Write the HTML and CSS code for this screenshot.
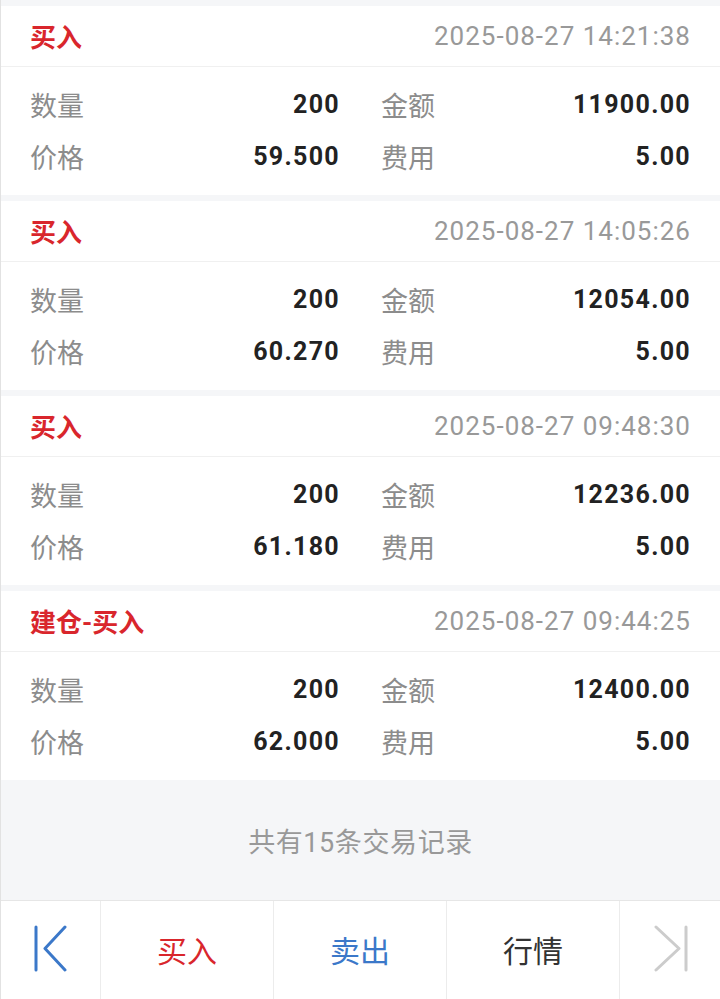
FILE: index.html
```html
<!DOCTYPE html>
<html lang="zh-CN">
<head>
    <meta charset="UTF-8">
    <meta name="viewport" content="width=device-width, initial-scale=1.0">
    <title>交易记录</title>
    <link rel="stylesheet" href="styles.css">
</head>
<body>
    <div class="page">
        <div class="list">
            <div class="trade">
                <div class="trade-head">
                    <span class="trade-type">买入</span>
                    <span class="trade-time">2025-08-27 14:21:38</span>
                </div>
                <div class="trade-body">
                    <div class="cell"><span class="label">数量</span><span class="value">200</span></div>
                    <div class="cell"><span class="label">金额</span><span class="value">11900.00</span></div>
                    <div class="cell"><span class="label">价格</span><span class="value">59.500</span></div>
                    <div class="cell"><span class="label">费用</span><span class="value">5.00</span></div>
                </div>
            </div>
            <div class="trade">
                <div class="trade-head">
                    <span class="trade-type">买入</span>
                    <span class="trade-time">2025-08-27 14:05:26</span>
                </div>
                <div class="trade-body">
                    <div class="cell"><span class="label">数量</span><span class="value">200</span></div>
                    <div class="cell"><span class="label">金额</span><span class="value">12054.00</span></div>
                    <div class="cell"><span class="label">价格</span><span class="value">60.270</span></div>
                    <div class="cell"><span class="label">费用</span><span class="value">5.00</span></div>
                </div>
            </div>
            <div class="trade">
                <div class="trade-head">
                    <span class="trade-type">买入</span>
                    <span class="trade-time">2025-08-27 09:48:30</span>
                </div>
                <div class="trade-body">
                    <div class="cell"><span class="label">数量</span><span class="value">200</span></div>
                    <div class="cell"><span class="label">金额</span><span class="value">12236.00</span></div>
                    <div class="cell"><span class="label">价格</span><span class="value">61.180</span></div>
                    <div class="cell"><span class="label">费用</span><span class="value">5.00</span></div>
                </div>
            </div>
            <div class="trade">
                <div class="trade-head">
                    <span class="trade-type">建仓-买入</span>
                    <span class="trade-time">2025-08-27 09:44:25</span>
                </div>
                <div class="trade-body">
                    <div class="cell"><span class="label">数量</span><span class="value">200</span></div>
                    <div class="cell"><span class="label">金额</span><span class="value">12400.00</span></div>
                    <div class="cell"><span class="label">价格</span><span class="value">62.000</span></div>
                    <div class="cell"><span class="label">费用</span><span class="value">5.00</span></div>
                </div>
            </div>
        </div>

        <div class="summary">共有15条交易记录</div>

        <div class="toolbar">
            <div class="tool">
                <svg class="icon" width="40" height="48" viewBox="0 0 40 48">
                    <path d="M5 2 V45 M34 2 L14 23.5 L34 45" fill="none" stroke="#3b78c9" stroke-width="3" stroke-linecap="round" stroke-linejoin="round"/>
                </svg>
            </div>
            <div class="tool buy">买入</div>
            <div class="tool sell">卖出</div>
            <div class="tool quote">行情</div>
            <div class="tool">
                <svg class="icon" width="40" height="48" viewBox="0 0 40 48">
                    <path d="M6 2 L29 23.5 L6 45 M36 2 V45" fill="none" stroke="#cccccc" stroke-width="3" stroke-linecap="round" stroke-linejoin="round"/>
                </svg>
            </div>
        </div>
    </div>
</body>
</html>
```

FILE: styles.css
```css
* {
    box-sizing: border-box;
}
body {
    margin: 0;
    font-family: Roboto, "Noto Sans CJK SC", sans-serif;
    background: #f5f6f8;
}
.page {
    width: 720px;
    min-height: 999px;
    border-left: 1px solid #e2e2e2;
    background: #f5f6f8;
}
.list {
    padding-top: 6px;
}
.trade {
    background: #fff;
    margin-bottom: 6px;
}
.trade:last-child {
    margin-bottom: 0;
}
.trade-head {
    height: 61px;
    display: flex;
    align-items: center;
    justify-content: space-between;
    padding: 0 30px 1px 29px;
    border-bottom: 1px solid #f0f0f0;
}
.trade-type {
    color: #d9262c;
    font-size: 26px;
    font-weight: bold;
}
.trade-time {
    color: #999;
    font-size: 26px;
    letter-spacing: 1px;
    margin-right: -1px;
}
.trade-body {
    display: grid;
    grid-template-columns: 1fr 1fr;
    column-gap: 42px;
    padding: 11px 30px 13px 29px;
}
.cell {
    height: 52px;
    display: flex;
    align-items: center;
    justify-content: space-between;
}
.label {
    color: #8c8c8c;
    font-size: 27px;
}
.value {
    color: #222;
    font-size: 25px;
    font-weight: bold;
    letter-spacing: 1.3px;
    margin-right: -1px;
}
.summary {
    height: 120px;
    display: flex;
    align-items: center;
    justify-content: center;
    color: #999;
    font-size: 27px;
    letter-spacing: 0.6px;
}
.toolbar {
    display: grid;
    grid-template-columns: 100px 173px 173px 173px 1fr;
    height: 99px;
    background: #fff;
    border-top: 1px solid #e6e6e6;
}
.tool {
    display: flex;
    align-items: center;
    justify-content: center;
    padding-bottom: 3px;
    border-right: 1px solid #ececec;
    font-size: 30px;
}
.tool:last-child {
    border-right: none;
}
.buy {
    color: #d9262c;
}
.sell {
    color: #3b78c9;
}
.quote {
    color: #333;
}
```
